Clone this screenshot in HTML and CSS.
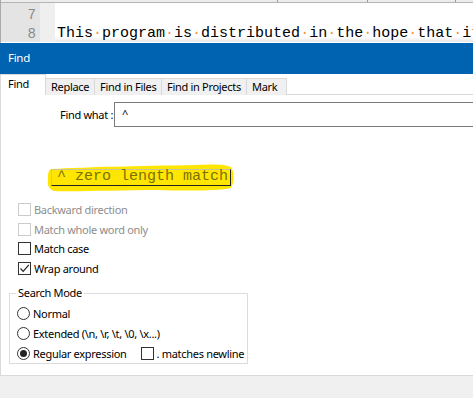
FILE: index.html
```html
<!DOCTYPE html>
<html lang="en">
<head>
  <meta charset="UTF-8" />
  <title>Find</title>
  <link rel="stylesheet" href="styles.css">
</head>
<body>
  <!-- editor behind the dialog -->
  <div class="editor">
    <div class="editor-top">
      <span class="sep s1"></span><span class="sep s2"></span><span class="sep s3"></span>
    </div>
    <div class="editor-body">
      <div class="gutter">
        <div class="num">7</div>
        <div class="num">8</div>
      </div>
      <div class="fold"></div>
      <div class="code">
        <div class="line"></div>
        <div class="line">This<i>·</i>program<i>·</i>is<i>·</i>distributed<i>·</i>in<i>·</i>the<i>·</i>hope<i>·</i>that<i>·</i>it</div>
      </div>
    </div>
  </div>

  <!-- find dialog -->
  <div class="titlebar">Find</div>
  <div class="dialog">
    <div class="tabs">
      <div class="tab active">Find</div>
      <div class="tab t-replace">Replace</div>
      <div class="tab t-files">Find in Files</div>
      <div class="tab t-projects">Find in Projects</div>
      <div class="tab t-mark">Mark</div>
    </div>
    <div class="panel">
      <div class="find-row">
        <label class="find-label">Find what :</label>
        <div class="find-input">^</div>
      </div>

      <div class="hint-wrap">
        <svg class="marker" width="190" height="30" viewBox="0 0 190 30">
          <path d="M4 6 C40 4 90 3 150 2 C165 1 178 1 184 4 C188 10 187 20 184 25 C170 28 140 28 110 27 C70 27 30 29 8 28 C2 27 0 22 1 16 C1 11 1 8 4 6 Z" fill="#ffe600"/>
        </svg>
        <div class="hint">^ zero length match</div>
      </div>

      <div class="options">
        <div class="opt disabled"><span class="box"></span>Backward direction</div>
        <div class="opt disabled"><span class="box"></span>Match whole word only</div>
        <div class="opt"><span class="box"></span>Match case</div>
        <div class="opt"><span class="box checked">
          <svg width="11" height="11" viewBox="0 0 11 11"><path d="M1.5 5.5 L4.2 8.3 L9.8 1.8" fill="none" stroke="#222" stroke-width="1.2"/></svg>
        </span>Wrap around</div>
      </div>

      <div class="mode">
        <div class="legend">Search Mode</div>
        <div class="opt"><span class="radio"></span>Normal</div>
        <div class="opt"><span class="radio"></span>Extended (\n, \r, \t, \0, \x...)</div>
        <div class="opt"><span class="radio on"></span>Regular expression<span class="box newline"></span>. matches newline</div>
      </div>
    </div>
  </div>
  <div class="footer"></div>
</body>
</html>
```

FILE: styles.css
```css
* {
  box-sizing: border-box;
}

body {
  margin: 0;
  width: 473px;
  height: 398px;
  overflow: hidden;
  background-color: #fff;
  font-family: "Noto Sans", "Open Sans", sans-serif;
  font-size: 11px;
  letter-spacing: -0.3px;
  color: #000;
  white-space: nowrap;
}

/* editor */
.editor {
  height: 43px;
  border-left: 1px solid #a9a9a9;
  overflow: hidden;
}

.editor-top {
  height: 3px;
  background-color: #ececec;
  border-bottom: 1px solid #b5b5b5;
  display: flex;
}

.sep {
  width: 1px;
  background-color: #9a9a9a;
}

.s1 { margin-left: 276px; }
.s2 { margin-left: 89px; }
.s3 { margin-left: 87px; }

.editor-body {
  display: flex;
  height: 39px;
  overflow: hidden;
  background: linear-gradient(#fff 34px, #e6e6e6);
  letter-spacing: 0;
}

.gutter {
  flex-shrink: 0;
  width: 39px;
  padding-top: 2px;
  background-color: #e4e4e4;
  color: #8a8a8a;
  font-family: "Liberation Mono", monospace;
  font-size: 14px;
  text-align: right;
  padding-right: 4px;
}

.fold {
  flex-shrink: 0;
  width: 15px;
  background-color: #efefef;
}

.num, .line {
  height: 19px;
  line-height: 20px;
}

.code {
  padding: 2px 0 0 2px;
  font-family: "Liberation Mono", monospace;
  font-size: 15px;
}

.code i {
  font-style: normal;
  color: #f29a3c;
}

/* dialog */
.titlebar {
  height: 31px;
  background-color: #0063b1;
  color: #fff;
  padding-left: 8px;
  line-height: 30px;
  font-size: 11.5px;
}

.tabs {
  display: flex;
  align-items: flex-end;
  height: 21px;
  margin-bottom: -1px;
  position: relative;
  z-index: 1;
}

.tab {
  height: 17px;
  line-height: 15px;
  padding-left: 5px;
  background-color: #f0f0f0;
  border: 1px solid #d9d9d9;
  border-left: none;
  border-bottom: none;
}

.t-replace { width: 49px; }
.t-files { width: 67px; }
.t-projects { width: 85px; }
.t-mark { width: 40px; }

.tab.active {
  height: 21px;
  width: 46px;
  line-height: 18px;
  padding-left: 7px;
  background-color: #fff;
  border-left: 1px solid #d9d9d9;
}

.panel {
  height: 282px;
  border-top: 1px solid #d9d9d9;
  border-left: 1px solid #d9d9d9;
  border-bottom: 1px solid #d9d9d9;
}

.find-row {
  display: flex;
  align-items: center;
  margin-top: 7px;
  padding-left: 59px;
}

.find-label {
  width: 54px;
}

.find-input {
  flex: 1;
  height: 25px;
  border: 1px solid #7a7a7a;
  border-right: none;
  padding-left: 7px;
  line-height: 21px;
}

.hint-wrap {
  position: relative;
  margin: 42px 0 0 50px;
  width: 180px;
  height: 17px;
}

.marker {
  position: absolute;
  left: -4px;
  top: -6px;
}

.hint {
  position: relative;
  height: 17px;
  border-top: 1px solid #c8c3a0;
  border-left: 1px solid #c8c3a0;
  border-right: 1px solid #222;
  border-bottom: 1px solid #222;
  font-family: "Liberation Mono", monospace;
  font-size: 15px;
  letter-spacing: 0;
  line-height: 14px;
  padding-left: 5px;
  color: #7a7000;
}

.options {
  margin-top: 14px;
  padding-left: 17px;
}

.opt {
  display: flex;
  align-items: center;
  height: 19.5px;
}

.box {
  width: 13px;
  height: 13px;
  border: 1px solid #333;
  background-color: #fff;
  margin-right: 3px;
  display: flex;
  align-items: center;
  justify-content: center;
  flex-shrink: 0;
}

.disabled {
  color: #8d8d8d;
}

.disabled .box {
  border-color: #cccccc;
}

/* search mode group */
.mode {
  position: relative;
  margin: 15px 0 0 8px;
  width: 239px;
  height: 71px;
  border: 1px solid #dcdcdc;
  padding: 9px 0 0 7px;
}

.legend {
  position: absolute;
  top: -8px;
  left: 6px;
  padding: 0 2px;
  background-color: #fff;
  line-height: 14px;
}

.mode .opt {
  height: 20px;
}

.radio {
  width: 13px;
  height: 13px;
  border: 1px solid #333;
  border-radius: 50%;
  margin-right: 3px;
  display: flex;
  align-items: center;
  justify-content: center;
  flex-shrink: 0;
}

.radio.on::after {
  content: "";
  width: 7px;
  height: 7px;
  border-radius: 50%;
  background-color: #222;
}

.box.newline {
  margin-left: 14px;
}

.footer {
  height: 30px;
  background-color: #f0f0f0;
}
```
